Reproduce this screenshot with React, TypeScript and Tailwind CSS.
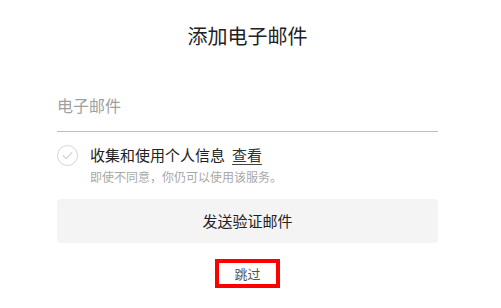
import React from 'react';

const font = { fontFamily: '"Noto Sans CJK SC", "Noto Sans", sans-serif' };

function CheckCircle() {
    return (
        <svg width="21" height="21" viewBox="0 0 21 21" className="shrink-0" aria-hidden="true">
            <circle cx="10.5" cy="10.5" r="10" fill="none" stroke="#d4d4d4" strokeWidth="1" />
            <path d="M6.2 10.8 L9.3 13.6 L14.8 7.6" fill="none" stroke="#cfcfcf" strokeWidth="1.2" strokeLinecap="round" strokeLinejoin="round" />
        </svg>
    );
}

export default function App() {
    return (
        <div className="w-[501px] h-[308px] bg-white overflow-hidden" style={font}>
            <div className="ml-[57px] w-[381px] flex flex-col">
                {/* Title */}
                <h1 className="pt-[22px] text-center text-[20px] leading-[28px] text-[#222]">
                    添加电子邮件
                </h1>

                {/* Email input */}
                <div className="mt-[43px] pb-[14px] border-b border-[#bdbdbd]">
                    <input
                        type="email"
                        placeholder="电子邮件"
                        className="w-full text-[16px] leading-[24px] text-[#222] placeholder:text-[#a0a0a0] outline-none bg-transparent"
                    />
                </div>

                {/* Consent */}
                <div className="mt-[12px] flex items-start">
                    <div className="mt-[1px]">
                        <CheckCircle />
                    </div>
                    <div className="ml-[12px] flex flex-col">
                        <div className="flex items-center text-[15px] leading-[22px] text-[#222]">
                            <span>收集和使用个人信息</span>
                            <span className="ml-[7px] underline underline-offset-[3px] decoration-[#444] text-[#333]">查看</span>
                        </div>
                        <p className="mt-[2px] text-[12px] leading-[18px] text-[#a8a8a8]">
                            即使不同意，你仍可以使用该服务。
                        </p>
                    </div>
                </div>

                {/* Send button */}
                <button className="mt-[13px] h-[44px] w-full rounded-[4px] bg-[#f4f4f4] text-[15px] text-[#222]">
                    发送验证邮件
                </button>

                {/* Skip */}
                <div className="mt-[16px] flex justify-center">
                    <button className="w-[65px] h-[29px] border-[4px] border-[#ff0000] text-[13px] leading-none text-[#555] flex items-center justify-center">
                        跳过
                    </button>
                </div>
            </div>
        </div>
    );
}
